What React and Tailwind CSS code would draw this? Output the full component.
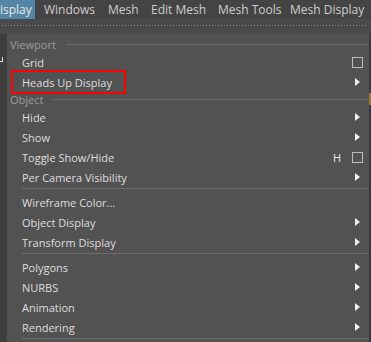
import React from "react";

const Arrow = () => (
  <svg width="5" height="8" viewBox="0 0 5 8" className="block">
    <path d="M0 0 L5 4 L0 8 Z" fill="#f2f2f2" />
  </svg>
);

const Box = () => <div className="w-[11px] h-[11px] border border-[#bdbdbd]" />;

function Item({ label, arrow, box, hotkey }) {
  return (
    <div className="h-[20px] flex items-center pl-[15px] pr-[6px] text-[#dedede]">
      <span className="flex-1">{label}</span>
      {hotkey && <span className="mr-[11px] text-[#e6e6e6]">{hotkey}</span>}
      {box && <Box />}
      {arrow && (
        <div className="w-[11px] flex justify-center">
          <Arrow />
        </div>
      )}
    </div>
  );
}

function Header({ label, h }) {
  return (
    <div className={`${h} flex items-center pl-[3px] text-[#9c9c9c]`}>
      <span>{label}</span>
      <div className="flex-1 h-px bg-[#6c6c6c] ml-[10px]" />
    </div>
  );
}

const Sep = () => (
  <div className="h-[5px] pl-[15px] pt-px">
    <div className="h-px bg-[#6c6c6c]" />
  </div>
);

export default function App() {
  return (
    <div
      className="w-[371px] h-[342px] overflow-hidden bg-[#444444] text-[11px] leading-none"
      style={{ fontFamily: '"Open Sans", "Noto Sans", sans-serif' }}
    >
      <div className="h-[19px] flex items-stretch text-[12px] text-[#cdcdcd]">
        <div className="w-[35px] bg-[#5285a6] flex items-center text-[#e8e8e8]">isplay</div>
        <div className="flex items-center pl-[9px] w-[73px]">Windows</div>
        <div className="flex items-center w-[43px]">Mesh</div>
        <div className="flex items-center w-[67px]">Edit Mesh</div>
        <div className="flex items-center w-[72px]">Mesh Tools</div>
        <div className="flex items-center">Mesh Display</div>
      </div>
      <div className="h-[15px] bg-[#4a4a4a] pt-[6px] pl-[2px] pr-[4px]">
        <div className="h-px bg-[repeating-linear-gradient(90deg,#8c8c8c_0px,#8c8c8c_1px,transparent_1px,transparent_3px)]" />
      </div>
      <div className="flex h-[308px]">
        <div className="w-[7px] bg-[#3e3e3e] relative">
          <div className="absolute left-0 top-[23px] w-[3px] h-[5px] border-r border-b border-[#e0e0e0]" />
        </div>
        <div className="flex-1 bg-[#525252] pt-[2px] relative">
          <Header label="Viewport" h="h-[16px]" />
          <Item label="Grid" box />
          <div className="relative">
            <Item label="Heads Up Display" arrow />
            <div className="absolute left-[4px] top-[-2px] w-[115px] h-[24px] border-2 border-[#ff0000]" />
          </div>
          <Header label="Object" h="h-[15px]" />
          <Item label="Hide" arrow />
          <Item label="Show" arrow />
          <Item label="Toggle Show/Hide" hotkey="H" box />
          <Item label="Per Camera Visibility" arrow />
          <Sep />
          <Item label="Wireframe Color..." />
          <Item label="Object Display" arrow />
          <Item label="Transform Display" arrow />
          <Sep />
          <Item label="Polygons" arrow />
          <Item label="NURBS" arrow />
          <Item label="Animation" arrow />
          <Item label="Rendering" arrow />
          <Sep />
        </div>
        <div className="w-[2px] bg-[#3a3a3a] relative">
          <div className="absolute left-0 top-[59px] w-[2px] h-[12px] bg-[#a07838]" />
        </div>
      </div>
    </div>
  );
}
